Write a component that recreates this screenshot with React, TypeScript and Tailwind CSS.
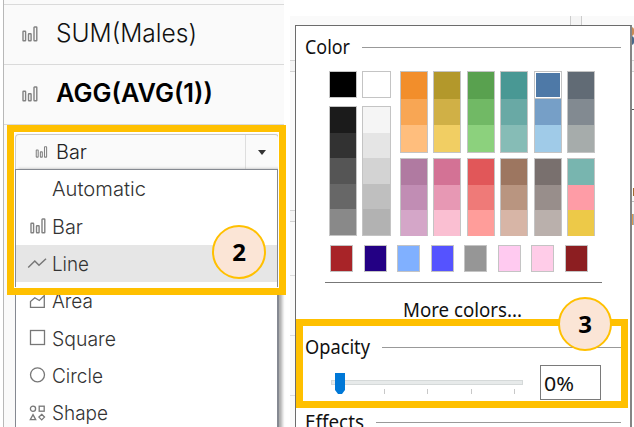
import type { ReactNode } from "react";

const BarIcon = ({ className = "" }: { className?: string }) => (
  <svg viewBox="0 0 16 16" className={`block ${className}`} fill="none" stroke="#828282" strokeWidth="1.4">
    <rect x="1" y="5.2" width="2.6" height="9.6" rx="0.5" />
    <rect x="6.5" y="7.8" width="2.6" height="7" rx="0.5" />
    <rect x="12" y="1" width="2.8" height="13.8" rx="0.5" />
  </svg>
);

const MarkIcon = ({ children }: { children: ReactNode }) => (
  <svg viewBox="0 0 20 18" className="block h-[18px] w-[20px]" fill="none" stroke="#777" strokeWidth="1.3">
    {children}
  </svg>
);

const marks: { label: string; icon: ReactNode; width: number; active?: boolean }[] = [
  { label: "Automatic", icon: null, width: 94 },
  { label: "Bar", icon: <BarIcon className="ml-[3px] h-[16px] w-[16px]" />, width: 31 },
  { label: "Line", icon: <MarkIcon><path d="M1.2 13.5 7.8 7l4.2 4.3L19 4.8" strokeWidth="1.5" /></MarkIcon>, width: 37, active: true },
  { label: "Area", icon: <MarkIcon><path d="M3.5 15.3V9.5L7.8 5.8l4.5 2.7 5-5v11.8Z" /></MarkIcon>, width: 41 },
  { label: "Square", icon: <MarkIcon><rect x="3.5" y="1.5" width="14" height="14" /></MarkIcon>, width: 64 },
  { label: "Circle", icon: <MarkIcon><circle cx="10.5" cy="8.8" r="7" /></MarkIcon>, width: 51 },
  {
    label: "Shape",
    icon: (
      <MarkIcon>
        <circle cx="6" cy="4.8" r="2.6" />
        <rect x="12.2" y="2.2" width="5" height="5" />
        <path d="m6 10.6 2.7 5H3.3ZM14.7 10.3l2.8 2.8-2.8 2.8-2.8-2.8Z" />
      </MarkIcon>
    ),
    width: 56,
  },
];

const Fitted = ({ text, width, baseClass = "" }: { text: string; width: number; baseClass?: string }) => (
  <svg width={width + 4} height="30" className={`block shrink-0 overflow-visible ${baseClass}`}>
    <text x="0" y="22" textLength={width} lengthAdjust="spacingAndGlyphs" fill="currentColor">{text}</text>
  </svg>
);

const Shelf = ({ text, bold, width }: { text: string; bold?: boolean; width: number }) => (
  <div className="flex h-[60px] shrink-0 items-start border-t border-[#dadada]">
    <BarIcon className="mt-[21px] ml-[18px] h-[16px] w-[16px] shrink-0" />
    <Fitted
      text={text}
      width={width}
      baseClass={bold ? "mt-[15px] ml-[18px] text-[25px] font-semibold text-black" : "mt-[15px] ml-[18px] text-[25px] font-light text-[#111]"}
    />
  </div>
);

const Stack = ({ colors, className }: { colors: string[]; className: string }) => (
  <div className={`flex flex-col border border-[#c4c4c4] ${className}`}>
    {colors.map((c) => <div key={c} className="flex-1" style={{ backgroundColor: c }} />)}
  </div>
);

const upper = [
  ["#f28e2b", "#f8a654", "#ffbe7d"],
  ["#b3982b", "#d0b046", "#f1ce63"],
  ["#59a14f", "#71b965", "#8cd17d"],
  ["#499894", "#69a9a5", "#86bcb6"],
  ["#4e79a7", "#769fc7", "#a0cbe8"],
  ["#616b75", "#828a91", "#a6acab"],
];
const lower = [
  ["#b07aa1", "#c18db4", "#d4a6c8"],
  ["#d37295", "#e798b4", "#fabfd2"],
  ["#e15759", "#ef7a78", "#ff9d9a"],
  ["#9d7660", "#b99580", "#d7b5a6"],
  ["#79706e", "#988e8b", "#bab0ac"],
  ["#78b5af", "#fe9ca6", "#edc948"],
];
const recent = ["#a82428", "#230084", "#80b0ff", "#5553ff", "#969696", "#ffcaf0", "#ffcce8", "#8c1e21"];

const Section = ({ label, width, className }: { label: string; width: number; className: string }) => (
  <div className={`flex h-[30px] items-start pr-[9px] pl-[9px] ${className}`}>
    <Fitted text={label} width={width} />
    <div className="mt-[15px] ml-[8px] h-px flex-1 bg-[#999]" />
  </div>
);

const Badge = ({ n, className }: { n: string; className: string }) => (
  <div className={`absolute flex h-[54px] w-[54px] items-center justify-center rounded-full border-2 border-[#ffc000] bg-[#fbe5d6] font-['Open_Sans',sans-serif] text-[24px] font-bold text-black ${className}`}>
    {n}
  </div>
);

function MarksPane() {
  return (
    <div className="flex h-[427px] w-[284px] flex-col bg-white font-['Inter',sans-serif]">
      <div className="ml-[3px] flex flex-1 flex-col border-l border-[#b8b8b8] bg-[#fafafa] pt-[4px]">
        <Shelf text="SUM(Males)" width={141} />
        <Shelf text="AGG(AVG(1))" width={157} bold />
        <div className="h-[10px] shrink-0 border-t border-[#dadada]" />
        <div className="ml-[11px] flex h-[35px] w-[264px] shrink-0 rounded-t border border-b-0 border-[#c9c9c9] text-[20px] font-light text-[#222]">
          <BarIcon className="mt-[11px] ml-[19px] h-[12px] w-[13px]" />
          <Fitted text="Bar" width={31} baseClass="mt-[2px] ml-[8px]" />
          <div className="ml-auto flex w-[33px] items-center justify-center border-l border-[#dedede]">
            <div className="h-0 w-0 border-x-4 border-t-[5px] border-x-transparent border-t-[#333]" />
          </div>
        </div>
        <div className="ml-[11px] h-[270px] w-[264px] shrink-0 border-2 border-b-0 border-t-[1px] border-l-[1px] border-[#858991] bg-white text-[20px] font-light text-[#333] shadow-[3px_0_3px_#aaa]">
          {marks.map((m) => (
            <div key={m.label} className={`flex h-[37.35px] items-center ${m.active ? "bg-[#e6e6e6]" : ""}`}>
              <div className="ml-[11px] flex w-[25px] shrink-0">{m.icon}</div>
              <Fitted text={m.label} width={m.width} baseClass="mt-px" />
            </div>
          ))}
        </div>
      </div>
    </div>
  );
}

function ColorDialog() {
  return (
    <div className="absolute top-[25px] left-[295px] h-[410px] w-[337px] border border-r-2 border-[#6c6c6c] border-r-[#858585] bg-white font-['Noto_Sans',sans-serif] text-[20px] text-[#111]">
      <Section label="Color" width={45} className="mt-[6px]" />
      <div className="mt-[9px] ml-[33px] flex h-[165px]">
        <div className="flex w-[28px] flex-col justify-between">
          <Stack className="h-[27px]" colors={["#000"]} />
          <Stack className="h-[130px]" colors={["#1b1b1b", "#323232", "#555", "#676767", "#898989"]} />
        </div>
        <div className="ml-[5px] flex w-[29px] flex-col justify-between">
          <Stack className="h-[27px]" colors={["#fff"]} />
          <Stack className="h-[130px]" colors={["#f5f5f5", "#e5e5e5", "#d3d3d3", "#bfbfbf", "#b2b2b2"]} />
        </div>
        <div className="ml-[9px] flex gap-[5.4px]">
          {upper.map((c, i) => (
            <div key={c[0]} className="relative flex w-[28px] flex-col justify-between">
              <Stack className="h-[82px]" colors={c} />
              <Stack className="h-[78px] border-b-0" colors={lower[i]} />
              {i === 4 && <div className="absolute top-[1px] left-[1px] h-[26px] w-[26px] border border-white outline-1 outline-[#c4c4c4]" />}
            </div>
          ))}
        </div>
      </div>
      <div className="mt-[9px] ml-[34px] flex gap-[10.5px]">
        {recent.map((c) => <div key={c} className="h-[27px] w-[23px] border border-[#c4c4c4]" style={{ backgroundColor: c }} />)}
      </div>
      <div className="mt-[10px] ml-[29px] h-px w-[277px] bg-[#777]" />
      <div className="mt-[12px] ml-[107px] h-[30px]"><Fitted text="More colors..." width={119} /></div>
      <Section label="Opacity" width={65} className="mt-[7px]" />
      <div className="mt-[3px] ml-[35px] flex h-[35px]">
        <div className="relative mt-[15px] h-[5px] w-[192px] border border-[#d5d9d9] bg-[#e7eaea]">
          <div className="mt-[8px] ml-[52px] flex w-[131px] justify-between">
            {[25, 50, 75, 100].map((v) => <div key={v} className="h-[5px] w-px bg-[#c8c8c8]" />)}
          </div>
          <svg className="absolute top-[-8px] left-[3px]" width="10" height="22"><path d="M0 0h10v17l-3 4H3l-3-4Z" fill="#0078d7" /></svg>
        </div>
        <div className="ml-[17px] h-[35px] w-[61px] border border-[#7a7a7a] pl-[3px]"><Fitted text="0%" width={30} baseClass="mt-[3px]" /></div>
      </div>
      <Section label="Effects" width={59} className="mt-[7px]" />
    </div>
  );
}

export default function App() {
  return (
    <div className="relative flex h-[427px] w-[634px] gap-[6px] overflow-hidden bg-white">
      <MarksPane />
      <div className="mt-[16px] flex flex-1 justify-between bg-[#fafafa]">
        <div className="w-[5px]">
          <div className="mt-[44px] h-[12px] border-y border-[#d2d2d2] bg-[#f5f5f5]" />
          <div className="mt-[138px] h-[12px] border-y border-[#d2d2d2] bg-[#f5f5f5]" />
          <div className="mt-[53px] h-px bg-[#ddd]" />
          <div className="mt-[59px] h-px bg-[#ddd]" />
          <div className="mt-[59px] h-px bg-[#ddd]" />
        </div>
        <div className="ml-auto h-[10px] w-[12px] border-x border-[#ccc] bg-[#f5f5f5]" />
        <div className="ml-[49px] w-[3px] overflow-hidden">
          <div className="mt-[11px] h-[9px] w-[3px] rounded-r-full border-2 border-l-0 border-[#c98a55]" />
          <div className="h-[9px] w-[3px] rounded-r-full border-2 border-l-0 border-[#49688a]" />
          <div className="mt-[15px] h-[12px] border-y border-[#d2d2d2] bg-[#f5f5f5]" />
          <div className="h-[37px] bg-white" />
          <div className="h-px bg-[#555]" />
          <div className="h-[78px] bg-white" />
          <div className="ml-[2px] h-[8px] bg-[#a36b32]" />
          <div className="mt-[5px] h-px bg-[#bbb]" />
          <div className="mt-[12px] ml-px h-[11px] border-l border-[#e29847] bg-[#9aabbc]" />
          <div className="h-[210px] bg-white" />
        </div>
      </div>
      <ColorDialog />
      <div className="absolute top-[125px] left-[7px] h-[170px] w-[279px] border-[7px] border-[#ffc000] shadow-[inset_0_0_0_1px_white]" />
      <div className="absolute top-[319px] left-[296px] h-[89px] w-[332px] border-[7px] border-[#ffc000]" />
      <Badge n="2" className="top-[225px] left-[212px]" />
      <Badge n="3" className="top-[297px] left-[558px]" />
    </div>
  );
}
